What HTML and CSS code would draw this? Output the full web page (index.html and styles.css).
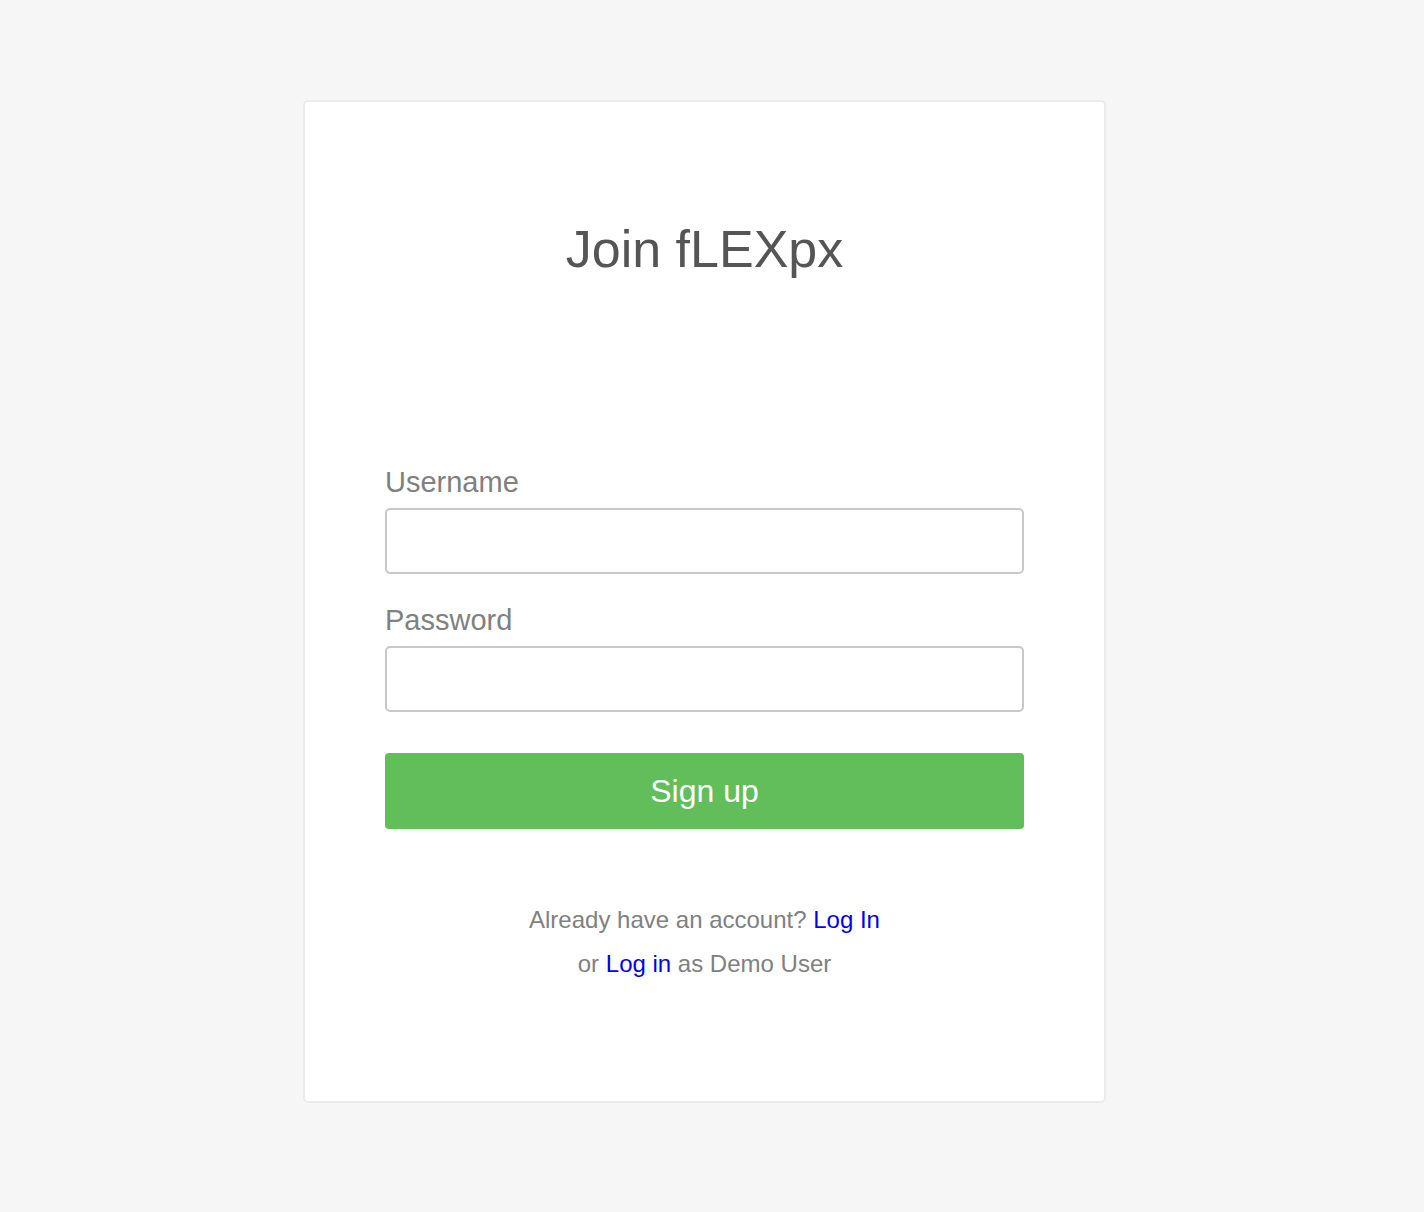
FILE: index.html
```html
<!DOCTYPE html>
<html lang="en">
<head>
<meta charset="utf-8">
<title>Join fLEXpx</title>
<link rel="stylesheet" href="styles.css">
</head>
<body>
<div class="page">
  <div class="card">
    <h1 class="title">Join fLEXpx</h1>
    <form class="form">
      <label class="label" for="username">Username</label>
      <input class="input" id="username" type="text">
      <label class="label label-2" for="password">Password</label>
      <input class="input" id="password" type="password">
      <button class="btn" type="button">Sign up</button>
    </form>
    <div class="links">
      <p class="line">Already have an account? <a href="#">Log In</a></p>
      <p class="line">or <a href="#">Log in</a> as Demo User</p>
    </div>
  </div>
</div>
</body>
</html>
```

FILE: styles.css
```css
html, body {
  margin: 0;
  padding: 0;
  background: #f6f6f6;
}
body {
  font-family: "Liberation Sans", Arial, Helvetica, sans-serif;
}
.page {
  width: 1409px;
  padding-top: 100px;
  padding-bottom: 109px;
}
.card {
  box-sizing: border-box;
  width: 803px;
  height: 1003px;
  margin: 0 auto;
  background: #fff;
  border: 2px solid #ebebeb;
  border-radius: 5px;
  padding: 0 80px;
}
.title {
  margin: 121px 0 0;
  font-size: 52px;
  line-height: 52px;
  font-weight: normal;
  color: #555;
  text-align: center;
}
.form {
  display: flex;
  flex-direction: column;
  margin-top: 193px;
}
.label {
  font-size: 29px;
  line-height: 29px;
  color: #808080;
  margin-bottom: 11px;
}
.label-2 {
  margin-top: 32px;
}
.input {
  box-sizing: border-box;
  height: 66px;
  width: 100%;
  margin: 0;
  border: 2px solid #c8c8c8;
  border-radius: 5px;
  background: #fff;
  font-size: 20px;
  padding: 0 12px;
}
.btn {
  margin-top: 41px;
  height: 76px;
  width: 100%;
  border: none;
  border-radius: 4px;
  background: #62bd5b;
  color: #fff;
  font-family: "Liberation Sans", Arial, sans-serif;
  font-size: 32px;
}
.links {
  margin-top: 69px;
  text-align: center;
}
.line {
  margin: 0;
  font-size: 24px;
  line-height: 44px;
  color: #808080;
}
.line a {
  color: #0000ee;
  text-decoration: none;
}
```
